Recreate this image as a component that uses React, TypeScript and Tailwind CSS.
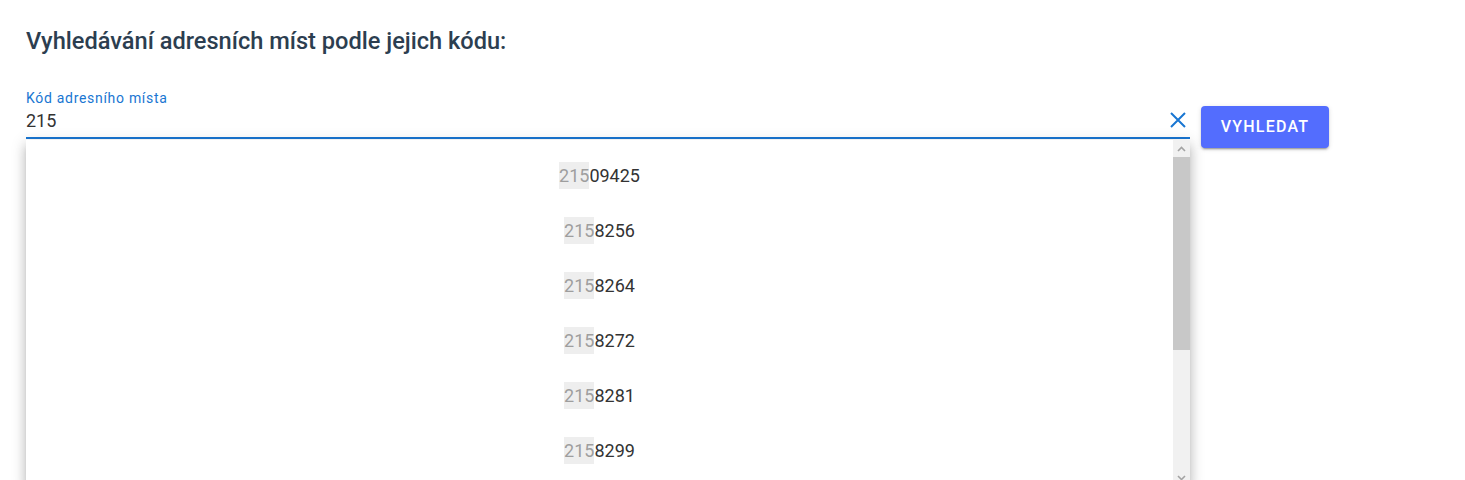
const results = ["09425", "8256", "8264", "8272", "8281", "8299"];
const query = "215";

function ScrollArrow({ up }: { up?: boolean }) {
  return (
    <svg width="9" height="6" viewBox="0 0 9 6" className={up ? "" : "rotate-180"}>
      <path d="M1 5 L4.5 1.5 L8 5" fill="none" stroke="#a3a3a3" strokeWidth="1.6" />
    </svg>
  );
}

function ClearIcon() {
  return (
    <svg width="18" height="18" viewBox="0 0 18 18" className="mr-[3px]">
      <path d="M2 2 L16 16 M16 2 L2 16" stroke="#1976d2" strokeWidth="2" fill="none" />
    </svg>
  );
}

export default function App() {
  return (
    <div
      className="min-h-[480px] bg-white pl-[26px] pt-[26px] overflow-hidden"
      style={{ fontFamily: "Roboto, 'Liberation Sans', sans-serif" }}
    >
      <h1 className="text-[23.6px] font-medium text-[#2c3e50] leading-[30px]">
        Vyhledávání adresních míst podle jejich kódu:
      </h1>

      <div className="mt-[34px] flex items-start gap-[11px]">
        <div className="relative w-[1164px]">
          <label className="block text-[14px] tracking-[0.7px] leading-[16px] text-[#1976d2]">
            Kód adresního místa
          </label>
          <div className="flex items-center h-[31px] pb-[3px]">
            <span className="flex-1 text-[18px] text-[#333333]">{query}</span>
            <ClearIcon />
          </div>
          <div className="h-[2px] bg-[#1976d2]" />

          <div className="absolute left-0 right-0 top-[50px] h-[346px] bg-white shadow-[0_5px_5px_-3px_rgba(0,0,0,0.2),0_8px_10px_1px_rgba(0,0,0,0.14),0_3px_14px_2px_rgba(0,0,0,0.12)] flex">
            <ul className="flex-1 pt-2">
              {results.map((r) => (
                <li key={r} className="h-[55px] flex items-center justify-center text-[18px] text-[#333333]">
                  <span className="bg-[#eeeeee] text-[#9e9e9e]">{query}</span>
                  {r}
                </li>
              ))}
            </ul>
            <div className="w-[17px] bg-[#f1f1f1] flex flex-col">
              <div className="h-[17px] flex items-center justify-center">
                <ScrollArrow up />
              </div>
              <div className="h-[193px] bg-[#c8c8c8]" />
              <div className="flex-1" />
              <div className="h-[17px] flex items-center justify-center">
                <ScrollArrow />
              </div>
            </div>
          </div>
        </div>

        <button className="mt-[16px] h-[42px] w-[128px] rounded-[4px] bg-[#536dfe] text-white text-[16px] font-medium tracking-[1.2px] shadow-[0_3px_1px_-2px_rgba(0,0,0,0.2),0_2px_2px_0_rgba(0,0,0,0.14),0_1px_5px_0_rgba(0,0,0,0.12)]">
          VYHLEDAT
        </button>
      </div>
    </div>
  );
}
